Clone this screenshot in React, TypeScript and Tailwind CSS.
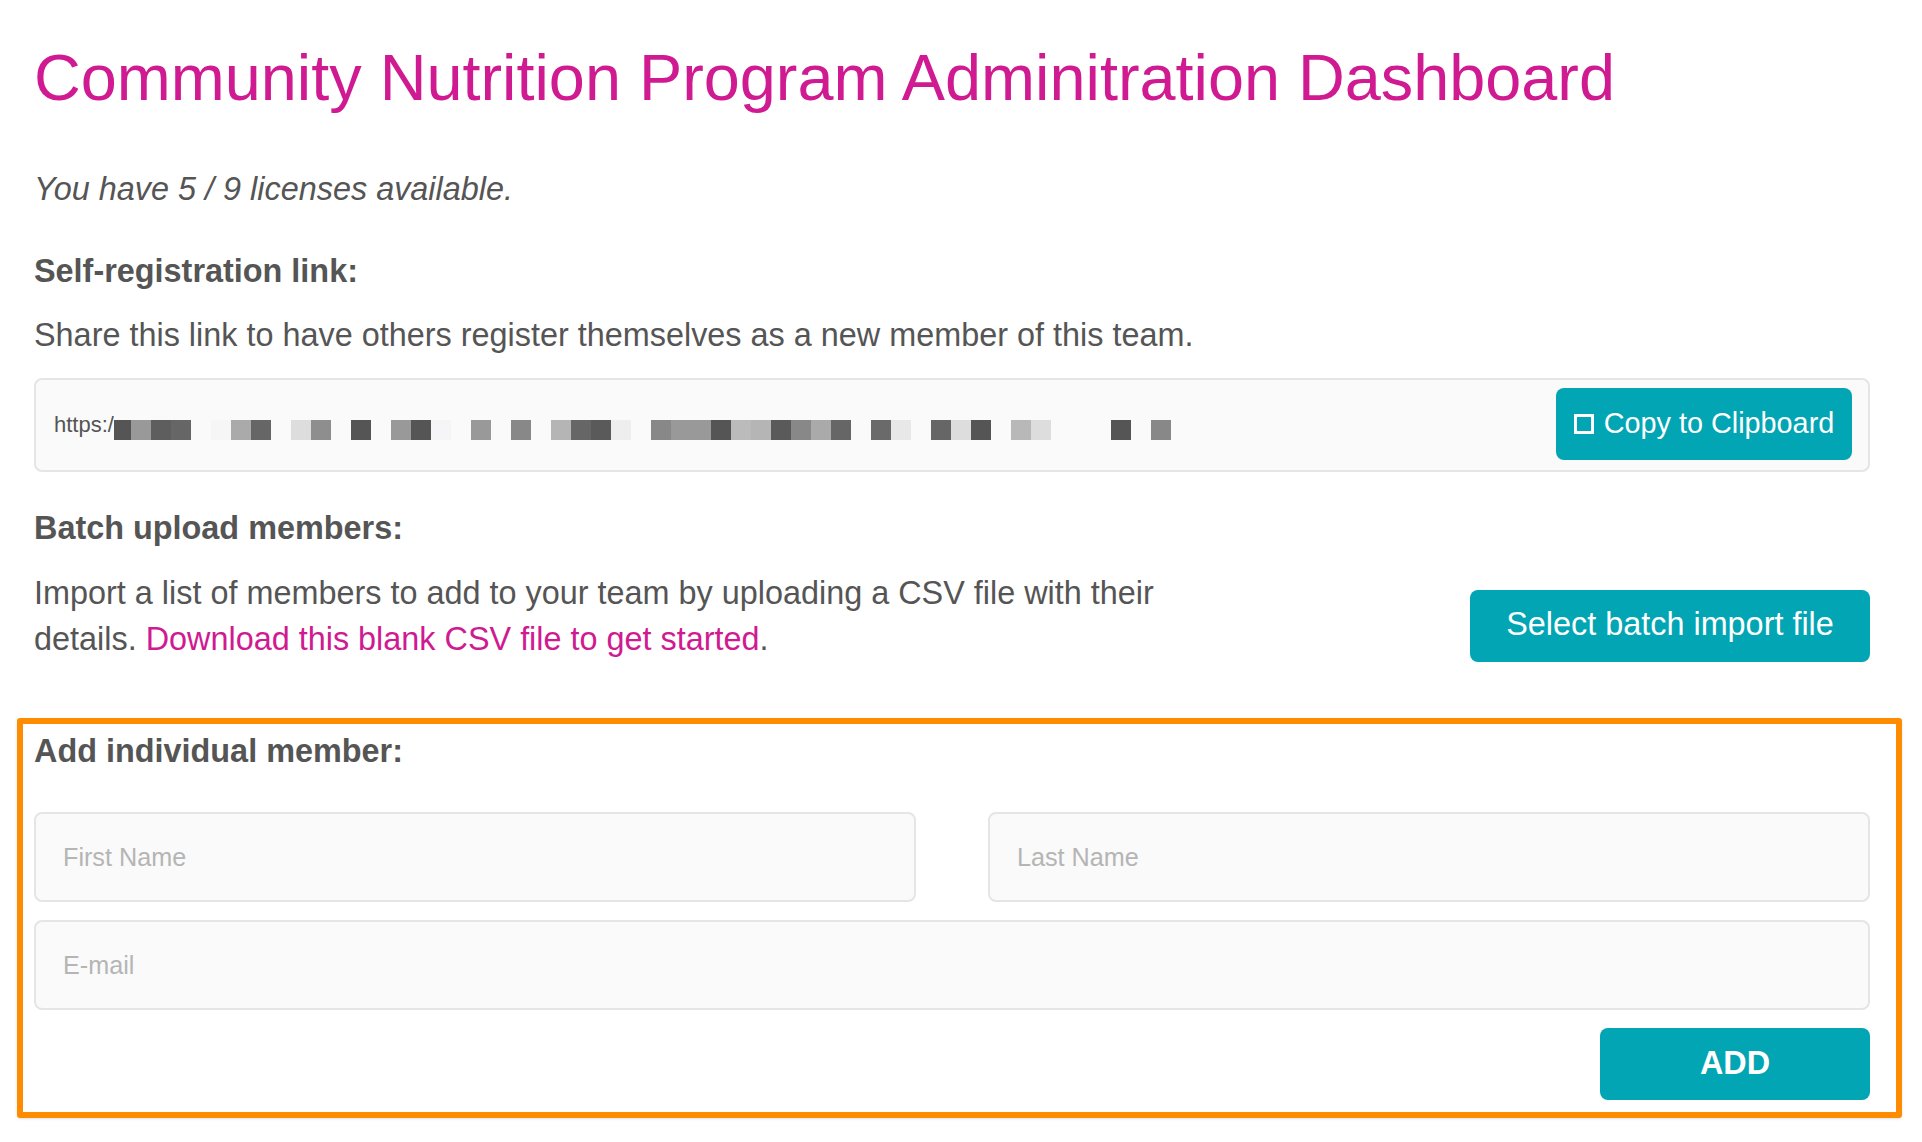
const mosaic = [
  'w-[17px] bg-[#555555]', 'w-5 bg-[#999999]', 'w-5 bg-[#5e5e5e]', 'w-5 bg-[#666666]', 'w-5', 'w-5 bg-[#f6f6f6]', 'w-5 bg-[#aaaaaa]', 'w-5 bg-[#666666]', 'w-5',
  'w-5 bg-[#dddddd]', 'w-5 bg-[#8e8e8e]', 'w-5', 'w-5 bg-[#555555]', 'w-5', 'w-5 bg-[#999999]', 'w-5 bg-[#555555]', 'w-5 bg-[#f5f5f7]', 'w-5',
  'w-5 bg-[#999999]', 'w-5', 'w-5 bg-[#888888]', 'w-5', 'w-5 bg-[#b5b5b5]', 'w-5 bg-[#666666]', 'w-5 bg-[#5a5a5a]', 'w-5 bg-[#eeeeee]', 'w-5',
  'w-5 bg-[#888888]', 'w-5 bg-[#999999]', 'w-5 bg-[#999999]', 'w-5 bg-[#555555]', 'w-5 bg-[#bbbbbb]', 'w-5 bg-[#b5b5b5]', 'w-5 bg-[#5a5a5a]', 'w-5 bg-[#888888]', 'w-5 bg-[#aaaaaa]', 'w-5 bg-[#666666]', 'w-5',
  'w-5 bg-[#6a6a6a]', 'w-5 bg-[#e8e8e8]', 'w-5', 'w-5 bg-[#666666]', 'w-5 bg-[#dddddd]', 'w-5 bg-[#555555]', 'w-5',
  'w-5 bg-[#b8b8b8]', 'w-5 bg-[#dddddd]', 'w-5', 'w-5', 'w-5', 'w-5 bg-[#555555]', 'w-5', 'w-5 bg-[#888888]',
];

function Field({ placeholder, className = '' }: { placeholder: string; className?: string }) {
  return (
    <input
      placeholder={placeholder}
      className={`h-[90px] rounded-[8px] border-2 border-[#e5e5e5] bg-[#fafafa] px-[27px] text-[25.2px] text-[#555555] outline-none placeholder:text-[#b5b5b5] ${className}`}
    />
  );
}

export default function App() {
  return (
    <div className="min-h-[1142px] bg-white pl-[34px] pr-[52px] pt-[38px] font-['Liberation_Sans',Arial,sans-serif] text-[32.4px] leading-[46px] text-[#555555]">
      <h1 className="text-[64.8px] leading-[80px] text-[#d01a91]">Community Nutrition Program Adminitration Dashboard</h1>

      <p className="mt-[48px] italic">You have 5 / 9 licenses available.</p>

      {/* Self registration */}
      <h2 className="mt-[36px] font-bold">Self-registration link:</h2>
      <p className="mt-[18px]">Share this link to have others register themselves as a new member of this team.</p>
      <div className="mt-[20px] flex h-[94px] items-center justify-between rounded-[8px] border-2 border-[#e5e5e5] bg-[#fafafa] pl-[18px] pr-[16px]">
        <div className="flex items-center">
          <span className="w-[60px] shrink-0 overflow-hidden text-[22px] leading-[24px]">https:/</span>
          <div className="mt-[10px] flex">
            {mosaic.map((cell, i) => (
              <span key={i} className={`h-5 ${cell}`} />
            ))}
          </div>
        </div>
        <button className="mb-[2px] flex h-[72px] w-[296px] items-center justify-center gap-[10px] rounded-[8px] bg-[#02a5b3] pb-[2px] text-[28.8px] text-white">
          <span className="mt-[2px] h-[20px] w-[20px] border-[3px] border-white" />
          Copy to Clipboard
        </button>
      </div>

      {/* Batch upload */}
      <h2 className="mt-[33px] font-bold">Batch upload members:</h2>
      <div className="mt-[19px] flex items-start justify-between">
        <p className="w-[1180px]">
          Import a list of members to add to your team by uploading a CSV file with their details.{' '}
          <a className="text-[#d01a91]">Download this blank CSV file to get started</a>.
        </p>
        <button className="mt-[20px] h-[72px] w-[400px] rounded-[8px] bg-[#02a5b3] pb-[5px] text-white">Select batch import file</button>
      </div>

      {/* Add member */}
      <section className="-ml-[17px] -mr-[32px] mt-[56px] rounded-[3px] border-[6px] border-[#ff8c00] pb-[12px] pl-[11px] pr-[26px] pt-[4px] shadow-sm">
        <h2 className="font-bold">Add individual member:</h2>
        <div className="mt-[38px] grid grid-cols-2 gap-x-[72px] gap-y-[18px]">
          <Field placeholder="First Name" />
          <Field placeholder="Last Name" />
          <Field placeholder="E-mail" className="col-span-2" />
        </div>
        <div className="mt-[18px] flex justify-end">
          <button className="h-[72px] w-[270px] rounded-[8px] bg-[#02a5b3] pb-[2px] font-bold text-white">ADD</button>
        </div>
      </section>
    </div>
  );
}
